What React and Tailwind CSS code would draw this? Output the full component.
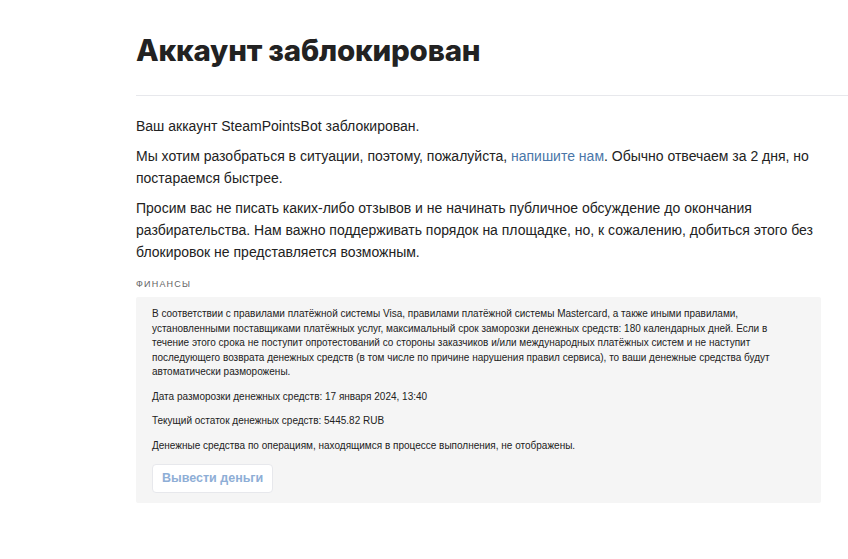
import React from "react";

export default function App() {
  return (
    <div className="min-h-screen bg-white" style={{ fontFamily: '"Liberation Sans", Arial, sans-serif' }}>
      <div className="pl-[136px]">
        {/* Header */}
        <div className="pt-[30px] pb-[25px] border-b border-[#e7e8ec]">
          <h1
            className="text-[29.5px] leading-[40px] font-extrabold text-[#222222] tracking-[-0.2px]"
            style={{ fontFamily: "Inter, sans-serif" }}
          >
            Аккаунт заблокирован
          </h1>
        </div>

        {/* Body */}
        <div className="w-[685px] pt-[19px] text-[14px] leading-[22px] text-[#222222]">
          <p>Ваш аккаунт SteamPointsBot заблокирован.</p>
          <p className="mt-[8px]">
            Мы хотим разобраться в ситуации, поэтому, пожалуйста,{" "}
            <a href="#" className="text-[#4a76a8] hover:underline">напишите нам</a>. Обычно отвечаем за 2 дня, но
            постараемся быстрее.
          </p>
          <p className="mt-[8px]">
            Просим вас не писать каких-либо отзывов и не начинать публичное обсуждение до окончания
            разбирательства. Нам важно поддерживать порядок на площадке, но, к сожалению, добиться этого без
            блокировок не представляется возможным.
          </p>

          {/* Finance */}
          <div className="mt-[15px] text-[9px] leading-[12px] tracking-[1.2px] uppercase text-[#656565]">Финансы</div>
          <div className="mt-[7px] bg-[#f5f5f5] rounded-[2px] px-[16px] pt-[10px] pb-[10px] text-[10px] leading-[14.5px] text-[#222222]">
            <p>
              В соответствии с правилами платёжной системы Visa, правилами платёжной системы Mastercard, а также иными
              правилами, установленными поставщиками платёжных услуг, максимальный срок заморозки денежных средств: 180
              календарных дней. Если в течение этого срока не поступит опротестований со стороны заказчиков и/или
              международных платёжных систем и не наступит последующего возврата денежных средств (в том числе по
              причине нарушения правил сервиса), то ваши денежные средства будут автоматически разморожены.
            </p>
            <p className="mt-[10px]">Дата разморозки денежных средств: 17 января 2024, 13:40</p>
            <p className="mt-[10px]">Текущий остаток денежных средств: 5445.82 RUB</p>
            <p className="mt-[10px]">Денежные средства по операциям, находящимся в процессе выполнения, не отображены.</p>
            <button className="mt-[11px] h-[29px] px-[9px] bg-white border border-[#e7e8ec] rounded-[4px] text-[12.5px] font-bold text-[#8eaed6]">
              Вывести деньги
            </button>
          </div>
        </div>
      </div>
    </div>
  );
}
